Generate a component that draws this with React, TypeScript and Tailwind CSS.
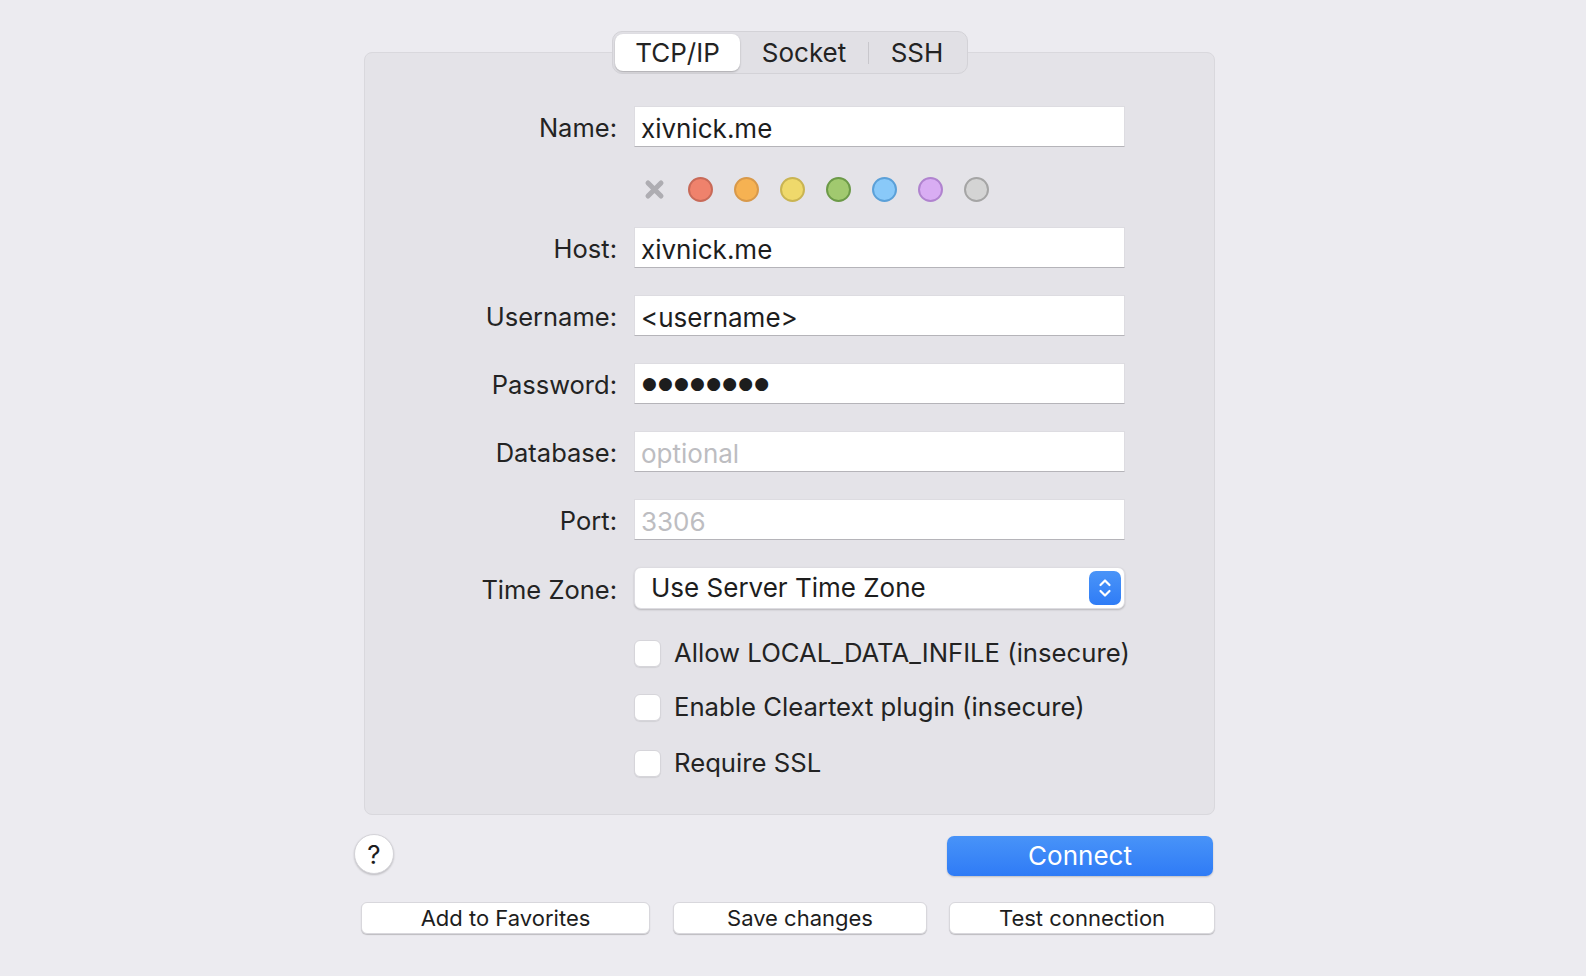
import React from "react";

const font = { fontFamily: "Inter, 'Noto Sans', 'Liberation Sans', sans-serif" };

const colors = [
  { bg: "bg-[#ef826c]", bd: "border-[#c86a58]" },
  { bg: "bg-[#f6b252]", bd: "border-[#d8994a]" },
  { bg: "bg-[#efd96b]", bd: "border-[#c9b452]" },
  { bg: "bg-[#a1c96f]", bd: "border-[#6c9a48]" },
  { bg: "bg-[#89c9f9]", bd: "border-[#5ba0d8]" },
  { bg: "bg-[#d9adf3]", bd: "border-[#b083cf]" },
  { bg: "bg-[#d4d4d4]", bd: "border-[#a5a5a5]" },
];

function Field({ label, value, placeholder }: { label: string; value?: string; placeholder?: string }) {
  return (
    <div className="flex items-center h-[41px]">
      <div className="w-[252px] text-right text-[25.5px] text-[#232323] pt-[4px]">{label}</div>
      <div className="ml-[17px] w-[491px] h-[41px] bg-white border border-[#dddce1] border-b-[#b5b4b9] flex items-center pl-[6px] pt-[3px] text-[26px]">
        {value ? <span className="text-[#1d1d1d]">{value}</span> : <span className="text-[#bdbdc1]">{placeholder}</span>}
      </div>
    </div>
  );
}

function Check({ label }: { label: string }) {
  return (
    <div className="flex items-center h-[27px] ml-[269px]">
      <div className="w-[27px] h-[27px] rounded-[6px] bg-white border border-[#d6d5da] shadow-[0_1px_1px_rgba(0,0,0,0.08)]" />
      <span className="ml-[13px] text-[25.7px] text-[#232323] whitespace-nowrap">{label}</span>
    </div>
  );
}

export default function App() {
  return (
    <div className="min-h-screen w-full bg-[#ecebf0] flex justify-center pr-[7px]" style={font}>
      <div className="w-[851px] pt-[31px] flex flex-col">
        {/* segmented control */}
        <div className="relative z-10 self-center flex items-center h-[43px] w-[356px] ml-[1px] rounded-[10px] bg-[#e1e0e5] border border-[#d3d2d7] p-[2px] text-[26px] text-[#232323]">
          <div className="w-[125px] h-full rounded-[8px] bg-white shadow-[0_1px_2px_rgba(0,0,0,0.25)] flex items-center justify-center">TCP/IP</div>
          <div className="w-[128px] flex items-center justify-center">Socket</div>
          <div className="w-px h-[22px] bg-[#c8c7cc]" />
          <div className="flex-1 flex items-center justify-center">SSH</div>
        </div>

        {/* panel */}
        <div className="-mt-[22px] h-[763px] rounded-[8px] bg-[#e4e3e8] border border-[#d9d8dd] pt-[53px] flex flex-col">
          <Field label="Name:" value="xivnick.me" />
          <div className="h-[80px] pt-[4px] ml-[277px] flex items-center gap-[21px] self-start">
            <svg width="25" height="25" viewBox="0 0 25 25">
              <path d="M6 6 L19 19 M19 6 L6 19" stroke="#aeadb2" strokeWidth="5" strokeLinecap="round" />
            </svg>
            {colors.map((c, i) => (
              <div key={i} className={`w-[25px] h-[25px] rounded-full border-2 ${c.bg} ${c.bd}`} />
            ))}
          </div>
          <div className="flex flex-col gap-[27px]">
            <Field label="Host:" value="xivnick.me" />
            <Field label="Username:" value="<username>" />
            <div className="flex items-center h-[41px]">
              <div className="w-[252px] text-right text-[25.5px] text-[#232323] pt-[4px]">Password:</div>
              <div className="ml-[17px] w-[491px] h-[41px] bg-white border border-[#dddce1] border-b-[#b5b4b9] flex items-center pl-[7px] text-[17px] tracking-[1.2px] text-[#1d1d1d]" style={{ fontFamily: "'DejaVu Sans', sans-serif" }}>
                ●●●●●●●●
              </div>
            </div>
            <Field label="Database:" placeholder="optional" />
            <Field label="Port:" placeholder="3306" />
            <div className="flex items-center h-[42px]">
              <div className="w-[252px] text-right text-[25.5px] text-[#232323] pt-[5px]">Time Zone:</div>
              <div className="ml-[17px] w-[491px] h-[42px] bg-white rounded-[7px] border border-[#dddce1] shadow-[0_1px_2px_rgba(0,0,0,0.2)] flex items-center pl-[16px] pr-[3px] text-[26px] text-[#1d1d1d]">
                <span className="flex-1 -mt-[2px]">Use Server Time Zone</span>
                <div className="w-[32px] h-[34px] rounded-[7px] bg-gradient-to-b from-[#4a94f8] to-[#2f7cf6] flex items-center justify-center">
                  <svg width="16" height="24" viewBox="0 0 16 24">
                    <path d="M3.5 9 L8 4.5 L12.5 9 M3.5 15 L8 19.5 L12.5 15" fill="none" stroke="white" strokeWidth="2.2" strokeLinecap="round" strokeLinejoin="round" />
                  </svg>
                </div>
              </div>
            </div>
          </div>
          <div className="mt-[31px] flex flex-col gap-[27px]">
            <Check label="Allow LOCAL_DATA_INFILE (insecure)" />
            <Check label="Enable Cleartext plugin (insecure)" />
            <div className="mt-[2px]">
              <Check label="Require SSL" />
            </div>
          </div>
        </div>

        {/* help + connect */}
        <div className="mt-[20px] flex items-center justify-between h-[41px]">
          <div className="-ml-[10px] -mt-[3px] w-[40px] h-[40px] rounded-full bg-white border border-[#d4d3d8] shadow-[0_1px_2px_rgba(0,0,0,0.2)] flex items-center justify-center text-[26px] text-[#1d1d1d]">?</div>
          <div className="mr-[2px] w-[266px] h-[40px] rounded-[7px] bg-gradient-to-b from-[#4893f8] to-[#2f7bf6] shadow-[0_1px_2px_rgba(0,0,0,0.2)] flex items-center justify-center text-[26px] text-white">
            Connect
          </div>
        </div>

        {/* bottom buttons */}
        <div className="mt-[26px] flex items-center -ml-[3px] text-[22px] text-[#1d1d1d]">
          <div className="w-[289px] h-[32px] rounded-[6px] bg-white border border-[#d8d7dc] shadow-[0_1px_1px_rgba(0,0,0,0.2)] flex items-center justify-center">Add to Favorites</div>
          <div className="ml-[23px] w-[254px] h-[32px] rounded-[6px] bg-white border border-[#d8d7dc] shadow-[0_1px_1px_rgba(0,0,0,0.2)] flex items-center justify-center">Save changes</div>
          <div className="ml-[22px] w-[266px] h-[32px] rounded-[6px] bg-white border border-[#d8d7dc] shadow-[0_1px_1px_rgba(0,0,0,0.2)] flex items-center justify-center">Test connection</div>
        </div>
      </div>
    </div>
  );
}
